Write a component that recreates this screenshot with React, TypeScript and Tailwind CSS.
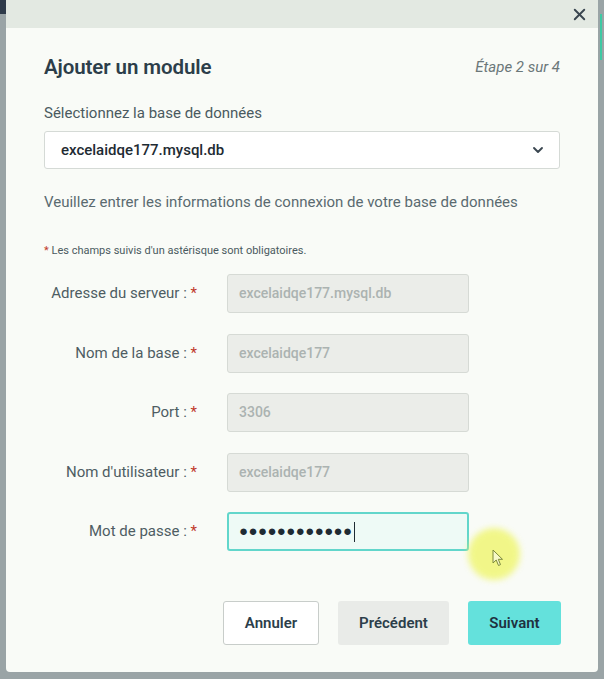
import { ChevronDown, X } from 'lucide-react';

interface Field {
  label: string;
  value: string;
}

const fields: Field[] = [
  { label: 'Adresse du serveur :', value: 'excelaidqe177.mysql.db' },
  { label: 'Nom de la base :', value: 'excelaidqe177' },
  { label: 'Port :', value: '3306' },
  { label: "Nom d'utilisateur :", value: 'excelaidqe177' },
];

function Label({ text }: { text: string }) {
  return (
    <label className="text-right text-[15px] text-[#4e5d63] leading-[39px] whitespace-nowrap">
      {text} <span className="text-[#c0392b]">*</span>
    </label>
  );
}

export default function App() {
  return (
    <div
      className="relative w-[604px] h-[679px] bg-[#9aa4a6] overflow-hidden px-[6px]"
      style={{ fontFamily: 'Roboto, "Noto Sans", sans-serif' }}
    >
      {/* bits of the page behind the backdrop */}
      <div className="absolute left-0 top-0 w-[6px] h-[14px] bg-[#2f3b4a]" />
      <div className="absolute right-[2px] top-[14px] w-[2px] h-[46px] bg-[#3fc9a4]" />

      <div className="w-[592px] h-[672px] bg-[#f9fbf7] rounded-b-[4px] flex flex-col">
        <div className="h-[28px] bg-[#e3e9e2] flex items-center justify-end pr-[9px]">
          <X className="w-[19px] h-[19px] text-[#3a4650]" strokeWidth={2.4} />
        </div>

        <div className="px-[38px] flex flex-col">
          <div className="mt-[26px] h-[26px] flex items-center justify-between">
            <h2 className="text-[20.5px] font-semibold text-[#2c3e4a] tracking-[-0.1px]">Ajouter un module</h2>
            <span className="text-[15px] italic text-[#6b7779]">Étape 2 sur 4</span>
          </div>

          <div className="mt-[23px] h-[20px] leading-[20px] text-[15px] text-[#4a5a60]">
            Sélectionnez la base de données
          </div>

          <div className="mt-[8px] h-[38px] bg-white border border-[#d5dad6] rounded-[3px] flex items-center justify-between pl-[16px] pr-[13px]">
            <span className="text-[15px] font-medium text-[#1e2b33]">excelaidqe177.mysql.db</span>
            <ChevronDown className="w-[16px] h-[16px] text-[#3a4650]" strokeWidth={2.8} />
          </div>

          <div className="mt-[22px] h-[22px] leading-[22px] text-[15px] text-[#5a6a70] whitespace-nowrap">
            Veuillez entrer les informations de connexion de votre base de données
          </div>

          <div className="mt-[30px] h-[16px] leading-[16px] text-[11px] text-[#4a5a60]">
            <span className="text-[#c0392b]">*</span> Les champs suivis d'un astérisque sont obligatoires.
          </div>

          <div className="mt-[15px] grid grid-cols-[153px_242px] gap-x-[30px] gap-y-[20.5px]">
            {fields.map((f) => (
              <div key={f.label} className="contents">
                <Label text={f.label} />
                <div className="h-[39px] bg-[#ebede9] border border-[#d6dad5] rounded-[3px] flex items-center pl-[11px] text-[14px] font-medium text-[#abb3b1]">
                  {f.value}
                </div>
              </div>
            ))}
            <Label text="Mot de passe :" />
            <div className="h-[39px] bg-[#eefaf6] border-2 border-[#62d6cb] rounded-[3px] flex items-center pl-[10px] text-[#1e2b33]">
              <span className="text-[15px] tracking-[0.4px] leading-none">●●●●●●●●●●●●</span>
              <span className="ml-[1px] w-[1px] h-[20px] bg-[#1e2b33]" />
            </div>
          </div>

          <div className="mt-[50px] flex justify-end gap-[19px] mr-[-1px]">
            <button className="w-[96px] h-[44px] bg-white border border-[#c8cdca] rounded-[3px] text-[15px] font-semibold text-[#2c3e4a]">
              Annuler
            </button>
            <button className="w-[111px] h-[44px] bg-[#e9ebe8] rounded-[3px] text-[15px] font-semibold text-[#2c3e4a]">
              Précédent
            </button>
            <button className="w-[93px] h-[44px] bg-[#64e1dc] rounded-[3px] text-[15px] font-semibold text-[#1f3240]">
              Suivant
            </button>
          </div>
        </div>
      </div>

      {/* mouse pointer highlight */}
      <div className="absolute left-[468px] top-[528px] w-[52px] h-[52px] rounded-full bg-[#eef55a] opacity-70 blur-[3px]" />
      <svg className="absolute left-[492px] top-[549px]" width="12" height="18" viewBox="0 0 12 18">
        <path d="M1 1 L1 14 L4.2 11 L6.5 16.5 L8.5 15.6 L6.3 10.3 L10.5 10.3 Z" fill="#f7f9c8" stroke="#7c8a3a" strokeWidth="1" strokeLinejoin="round" />
      </svg>
    </div>
  );
}
